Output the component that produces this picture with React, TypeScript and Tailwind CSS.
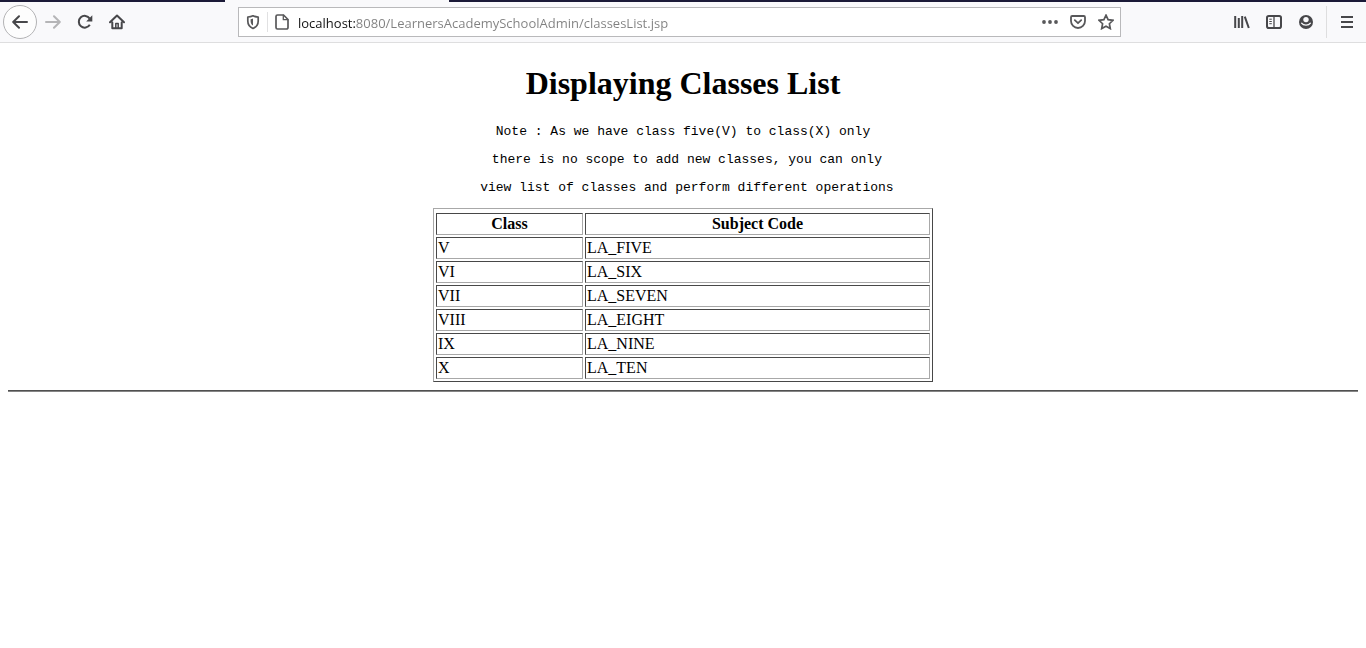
import React from "react";

const classes = [
  { name: "V", code: "LA_FIVE" },
  { name: "VI", code: "LA_SIX" },
  { name: "VII", code: "LA_SEVEN" },
  { name: "VIII", code: "LA_EIGHT" },
  { name: "IX", code: "LA_NINE" },
  { name: "X", code: "LA_TEN" },
];

function Icon({ children }: { children: React.ReactNode }) {
  return (
    <svg
      viewBox="0 0 16 16"
      className="size-4"
      fill="none"
      stroke="currentColor"
      strokeWidth="2"
      strokeLinecap="round"
      strokeLinejoin="round"
      aria-hidden="true"
    >
      {children}
    </svg>
  );
}

function ToolButton({ label, children }: { label: string; children: React.ReactNode }) {
  return (
    <button type="button" aria-label={label} className="flex size-8 shrink-0 items-center justify-center">
      {children}
    </button>
  );
}

function FieldButton({ label, children }: { label: string; children: React.ReactNode }) {
  return (
    <button type="button" aria-label={label} className="flex h-7 w-7 shrink-0 items-center justify-center">
      {children}
    </button>
  );
}

function AddressBar() {
  return (
    <form className="flex h-[30px] min-w-0 flex-1 items-center border border-[#b9b9bb] bg-white text-[#58585a]">
      <FieldButton label="Tracking protection">
        <Icon>
          <path d="M8 1.8c1.6.8 3.4 1.2 5.2 1.2v4c0 3.5-1.7 6-5.2 7.5-3.5-1.5-5.2-4-5.2-7.5V3C4.6 3 6.4 2.6 8 1.8z" strokeWidth="1.7" />
          <path d="M8 4.6v7C6.2 10.4 5.6 8.9 5.6 7V5.3C6.5 5.2 7.3 5 8 4.6z" fill="currentColor" stroke="none" />
        </Icon>
      </FieldButton>
      <span className="h-5 w-px bg-[#e1e1e2]" />
      <FieldButton label="Site information">
        <Icon>
          <path d="M3.5 1h6L14 5.5v8a1.5 1.5 0 0 1-1.5 1.5h-9A1.5 1.5 0 0 1 2 13.5v-11A1.5 1.5 0 0 1 3.5 1z" strokeWidth="1.7" />
          <path d="M9.3 1.2v4.500h4.500" strokeWidth="1.3" />
        </Icon>
      </FieldButton>
      <input
        type="text"
        aria-label="Address"
        defaultValue="localhost:8080/LearnersAcademySchoolAdmin/classesList.jsp"
        className="ml-0.5 h-7 min-w-0 flex-1 bg-[linear-gradient(90deg,#111_58px,#808080_58px)] bg-clip-text pt-0.5 font-['Open_Sans',sans-serif] text-[13px] text-transparent outline-none"
      />
      <FieldButton label="Page actions">
        <svg viewBox="0 0 16 16" className="size-4" fill="currentColor" aria-hidden="true">
          <circle cx="2" cy="8" r="1.9" />
          <circle cx="8" cy="8" r="1.9" />
          <circle cx="14" cy="8" r="1.9" />
        </svg>
      </FieldButton>
      <FieldButton label="Save to Pocket">
        <Icon>
          <path d="M2.2 2h11.6c.7 0 1.2.5 1.2 1.2V7A7 7 0 0 1 1 7V3.2C1 2.5 1.5 2 2.200 2z" strokeWidth="1.8" />
          <path d="M4.8 6.200 8 9.200l3.200-3" strokeWidth="1.8" />
        </Icon>
      </FieldButton>
      <FieldButton label="Bookmark this page">
        <Icon>
          <path d="M8 1.200l2.100 4.500 4.900.600-3.600 3.400.9 4.900L8 12.200l-4.300 2.400.9-4.900L1 6.300l4.900-.600z" strokeWidth="1.7" strokeLinejoin="miter" />
        </Icon>
      </FieldButton>
    </form>
  );
}

function Toolbar() {
  return (
    <header className="bg-[#f9f9fb]">
      <div className="flex h-0.5">
        <div className="w-[225px] bg-[#1b1a38]" />
        <div className="w-56" />
        <div className="flex-1 bg-[#1b1a38]" />
      </div>
      <nav className="flex h-[41px] items-center border-b border-[#dededf] px-[3px] text-[#47474a]">
        <button
          type="button"
          aria-label="Back"
          className="flex size-[34px] shrink-0 items-center justify-center rounded-full border border-[#b3b3b5] bg-[#fdfdfd]"
        >
          <Icon>
            <path d="M15 8H1.500M7 2.200 1.200 8 7 13.800" />
          </Icon>
        </button>
        <button
          type="button"
          aria-label="Forward"
          disabled
          className="flex size-8 shrink-0 items-center justify-center text-[#b5b5b7]"
        >
          <Icon>
            <path d="M1 8h13.500M9 2.200 14.800 8 9 13.800" />
          </Icon>
        </button>
        <ToolButton label="Reload">
          <Icon>
            <path d="M12.800 10.800A5.900 5.900 0 1 1 12.700 4.600" strokeLinecap="butt" />
            <path d="M15.300 1.300v6.200H9.200z" fill="currentColor" stroke="none" />
          </Icon>
        </ToolButton>
        <ToolButton label="Home">
          <Icon>
            <path d="M1 8.300 8 1.500l7 6.800M3.300 8.500v5.700h9.400V8.500" />
            <path d="M6.800 14V9.500h2.400V14" strokeWidth="1.5" />
          </Icon>
        </ToolButton>
        <div className="ml-[105px] flex min-w-0 flex-1">
          <AddressBar />
        </div>
        <div className="ml-[105px] flex shrink-0 items-center">
          <ToolButton label="Library">
            <Icon>
              <path d="M1.200 2v12M4.800 4v10M8.200 2v12M10.800 2.600l4 11.400" strokeLinecap="butt" />
            </Icon>
          </ToolButton>
          <ToolButton label="Sidebars">
            <Icon>
              <rect x="1" y="2" width="14" height="12" rx="1.8" />
              <path d="M8 2v12" strokeWidth="1.3" />
              <path d="M3.300 5.200h2.500M3.300 7.500h2.500M3.300 9.700h2.500" strokeWidth="1" strokeLinecap="butt" />
            </Icon>
          </ToolButton>
          <ToolButton label="Account">
            <Icon>
              <circle cx="8" cy="8" r="7" fill="currentColor" stroke="none" />
              <ellipse cx="8" cy="5.6" rx="2.7" ry="2.6" fill="#f9f9fb" stroke="none" />
              <path d="M3.600 9.200c1.800 2.600 7 2.600 8.800 0" stroke="#f9f9fb" strokeWidth="1.3" />
            </Icon>
          </ToolButton>
        </div>
        <span className="mx-1 h-8 w-px shrink-0 bg-[#dededf]" />
        <ToolButton label="Open menu">
          <svg viewBox="0 0 16 16" className="size-4" stroke="currentColor" strokeWidth="2" aria-hidden="true">
            <path d="M2 3h12M2 8h12M2 13h12" />
          </svg>
        </ToolButton>
      </nav>
    </header>
  );
}

export default function App() {
  return (
    <div className="min-h-screen bg-white font-['Liberation_Serif',serif] text-black">
      <Toolbar />
      <main className="px-2 pt-[22px]">
        <h1 className="text-center text-[32px] leading-9 font-bold">Displaying Classes List</h1>
        <div className="mt-[17px] text-center font-['Liberation_Mono',monospace] text-[13px] leading-7 whitespace-pre">
          <p>Note : As we have class five(V) to class(X) only</p>
          <p> there is no scope to add new classes, you can only</p>
          <p> view list of classes and perform different operations</p>
        </div>
        <table className="mx-auto mt-1.5 w-[500px] max-w-full border-separate border-spacing-0.5 border border-t-[#a8a8a8] border-r-[#484848] border-b-[#484848] border-l-[#a8a8a8] pt-0.5 text-[16px] leading-[18px]">
          <thead>
            <tr>
              <th className="w-[147px] border border-t-[#484848] border-r-[#a8a8a8] border-b-[#a8a8a8] border-l-[#484848] p-px font-bold">
                Class
              </th>
              <th className="border border-t-[#484848] border-r-[#a8a8a8] border-b-[#a8a8a8] border-l-[#484848] p-px font-bold">
                Subject Code
              </th>
            </tr>
          </thead>
          <tbody>
            {classes.map((item) => (
              <tr key={item.code}>
                <td className="border border-t-[#484848] border-r-[#a8a8a8] border-b-[#a8a8a8] border-l-[#484848] p-px">
                  {item.name}
                </td>
                <td className="border border-t-[#484848] border-r-[#a8a8a8] border-b-[#a8a8a8] border-l-[#484848] p-px">
                  {item.code}
                </td>
              </tr>
            ))}
          </tbody>
        </table>
        <hr className="mt-2 h-0.5 border-t border-b border-t-[#505050] border-b-[#858585]" />
      </main>
    </div>
  );
}
